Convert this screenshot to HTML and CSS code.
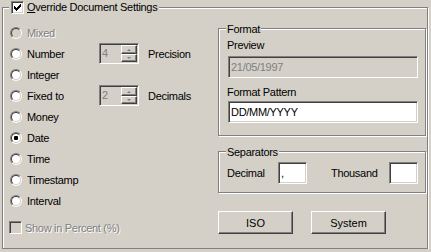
FILE: index.html
```html
<!DOCTYPE html>
<html lang="en">
<head>
    <meta charset="UTF-8">
    <title>Override Document Settings</title>
    <link rel="stylesheet" href="styles.css">
</head>
<body>
    <div class="group frame">
        <div class="group-title main-title">
            <span class="check checked">
                <svg width="7" height="7" viewBox="0 0 7 7"><path d="M0 2h1v3h-1zM1 3h1v3h-1zM2 4h1v3h-1zM3 3h1v3h-1zM4 2h1v3h-1zM5 1h1v3h-1zM6 0h1v3h-1z" fill="#000"/></svg>
            </span>
            <span><u>O</u>verride Document Settings</span>
        </div>
        <div class="frame-body">
            <div class="options">
                <div class="row"><span class="opt disabled"><span class="radio off"></span>Mixed</span></div>
                <div class="row">
                    <span class="opt wide"><span class="radio"></span>Number</span>
                    <span class="spin"><span class="spin-val">4</span><span class="spin-btns"><span class="spin-btn"><i class="arr up"></i></span><span class="spin-btn"><i class="arr down"></i></span></span></span>
                    <span class="spin-label">Precision</span>
                </div>
                <div class="row"><span class="opt"><span class="radio"></span>Integer</span></div>
                <div class="row">
                    <span class="opt wide"><span class="radio"></span>Fixed to</span>
                    <span class="spin"><span class="spin-val">2</span><span class="spin-btns"><span class="spin-btn"><i class="arr up"></i></span><span class="spin-btn"><i class="arr down"></i></span></span></span>
                    <span class="spin-label">Decimals</span>
                </div>
                <div class="row"><span class="opt"><span class="radio"></span>Money</span></div>
                <div class="row"><span class="opt"><span class="radio on"></span>Date</span></div>
                <div class="row"><span class="opt"><span class="radio"></span>Time</span></div>
                <div class="row"><span class="opt"><span class="radio"></span>Timestamp</span></div>
                <div class="row"><span class="opt"><span class="radio"></span>Interval</span></div>
                <div class="row percent"><span class="opt disabled check-opt"><span class="check off"></span>Show in Percent (%)</span></div>
            </div>
            <div class="side">
                <div class="group format">
                    <div class="group-title sub-title">Format</div>
                    <div class="label first">Preview</div>
                    <div class="edit readonly wide-edit">21/05/1997</div>
                    <div class="label second">Format Pattern</div>
                    <div class="edit wide-edit pattern">DD/MM/YYYY</div>
                </div>
                <div class="group separators">
                    <div class="group-title sub-title">Separators</div>
                    <div class="sep-row">
                        <span class="sep-label">Decimal</span>
                        <span class="edit small-edit">,</span>
                        <span class="sep-label thousand">Thousand</span>
                        <span class="edit small-edit"></span>
                    </div>
                </div>
                <div class="btns">
                    <button class="btn">ISO</button>
                    <button class="btn">System</button>
                </div>
            </div>
        </div>
    </div>
</body>
</html>
```

FILE: styles.css
```css
body {
    margin: 0;
    background: #d4d0c8;
    font: 11px "Liberation Sans", Arial, sans-serif;
    letter-spacing: -0.3px;
    color: #000;
}
.group {
    box-sizing: border-box;
    border: 1px solid #808080;
    box-shadow: inset 1px 1px #fff, 1px 1px #fff;
}
.frame {
    width: 426px;
    height: 242px;
    margin: 7px 0 0 2px;
}
.group-title {
    display: flex;
    align-items: center;
    width: max-content;
    height: 13px;
    line-height: 13px;
    background: #d4d0c8;
}
.main-title {
    margin: -7px 0 0 6px;
    padding: 0 2px;
    gap: 3px;
}
.sub-title {
    margin: -6px 0 0 -1px;
    padding: 0 1px;
}
.frame-body {
    display: flex;
    padding: 8px 0 0 7px;
}
.options {
    width: 208px;
}
.side {
    width: 208px;
}
.row {
    height: 21px;
    display: flex;
    align-items: center;
}
.opt {
    display: flex;
    align-items: center;
    gap: 5px;
}
.opt.wide {
    width: 89px;
}
.disabled {
    color: #808080;
    text-shadow: 1px 1px 0 #fff;
}
.radio {
    box-sizing: border-box;
    width: 12px;
    height: 12px;
    border-radius: 50%;
    border: 1px solid;
    border-color: #808080 #fff #fff #808080;
    display: flex;
}
.radio::before {
    content: "";
    box-sizing: border-box;
    width: 10px;
    height: 10px;
    border-radius: 50%;
    border: 1px solid;
    border-color: #404040 #d4d0c8 #d4d0c8 #404040;
    background: #fff;
}
.radio.off::before {
    background: #d4d0c8;
}
.radio.on::before {
    background: radial-gradient(circle, #000 2px, #fff 2.5px);
}
.check {
    box-sizing: border-box;
    width: 13px;
    height: 13px;
    border: 1px solid;
    border-color: #808080 #fff #fff #808080;
    box-shadow: inset 1px 1px #404040, inset -1px -1px #d4d0c8;
    background: #fff;
    display: flex;
    align-items: center;
    justify-content: center;
}
.check.off {
    background: #d4d0c8;
}
.percent {
    margin-top: 6px;
}
.check-opt {
    gap: 3px;
    margin-left: -1px;
}
.spin {
    box-sizing: border-box;
    width: 40px;
    height: 21px;
    padding: 1px;
    border: 1px solid;
    border-color: #808080 #fff #fff #808080;
    box-shadow: inset 1px 1px #404040, inset -1px -1px #d4d0c8;
    background: #d4d0c8;
    color: #808080;
    display: flex;
    justify-content: space-between;
}
.spin-val {
    padding-left: 1px;
    line-height: 17px;
}
.spin-btns {
    display: flex;
    flex-direction: column;
    width: 16px;
}
.spin-btn {
    box-sizing: border-box;
    height: 9px;
    border: 1px solid;
    border-color: #fff #404040 #404040 #fff;
    box-shadow: inset -1px -1px #808080;
    display: flex;
    align-items: center;
    justify-content: center;
}
.spin-btn + .spin-btn {
    height: 8px;
}
.arr {
    width: 0;
    height: 0;
    border-left: 2px solid transparent;
    border-right: 2px solid transparent;
}
.arr.up {
    border-bottom: 2px solid #808080;
}
.arr.down {
    border-top: 2px solid #808080;
}
.spin-label {
    margin-left: 9px;
}
.format {
    margin-top: 6px;
    width: 208px;
    padding: 0 0 12px 8px;
}
.label {
    line-height: 13px;
}
.label.first {
    margin-top: 3px;
}
.label.second {
    margin-top: 8px;
}
.edit {
    box-sizing: border-box;
    height: 22px;
    padding: 0 2px;
    line-height: 20px;
    border: 1px solid;
    border-color: #808080 #fff #fff #808080;
    box-shadow: inset 1px 1px #404040, inset -1px -1px #d4d0c8;
    background: #fff;
}
.edit.readonly {
    background: #d4d0c8;
    color: #808080;
}
.wide-edit {
    width: 190px;
    margin: 4px 0 0 1px;
}
.wide-edit.pattern {
    margin-top: 2px;
}
.separators {
    margin-top: 15px;
    width: 208px;
    padding: 0 0 8px 8px;
}
.sep-row {
    display: flex;
    align-items: center;
    height: 22px;
    margin-top: 3px;
}
.sep-label {
    width: 51px;
}
.sep-label.thousand {
    width: 58px;
    margin-left: 24px;
}
.small-edit {
    width: 29px;
}
.btns {
    display: flex;
    gap: 18px;
    margin-top: 18px;
}
.btn {
    box-sizing: border-box;
    width: 75px;
    height: 23px;
    padding: 0;
    border: 1px solid;
    border-color: #fff #404040 #404040 #fff;
    box-shadow: inset -1px -1px #808080;
    background: #d4d0c8;
    font: inherit;
    color: #000;
}
```
